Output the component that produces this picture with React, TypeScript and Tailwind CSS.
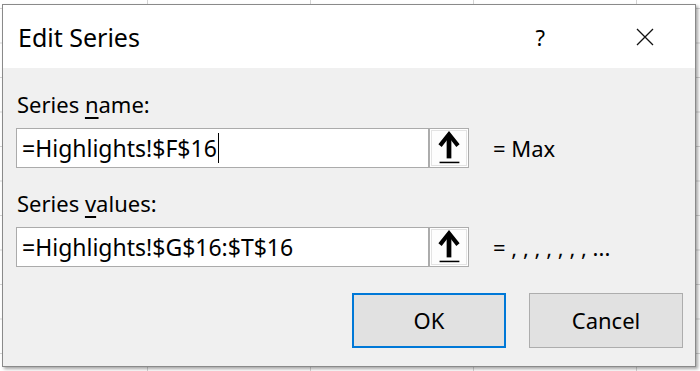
import React from 'react';

const font = "font-['Noto_Sans',sans-serif]";

// collapse/expand button beside the reference fields
const RefButton: React.FC = () => (
  <div className="w-[40px] h-[40px] border border-[#adadad] bg-white p-[1px]">
    <div className="w-full h-full border border-[#e3e3e3] bg-[#fdfdfd] flex items-center justify-center">
      <svg width="36" height="36" viewBox="0 0 36 36">
        <polyline points="8.5,15.5 18,3.5 27.5,15.5" fill="none" stroke="#000" strokeWidth="4.4" strokeLinejoin="miter" />
        <rect x="15.5" y="4" width="5" height="25" fill="#000" />
        <rect x="8" y="32.5" width="21" height="1.6" fill="#000" />
      </svg>
    </div>
  </div>
);

const RefRow: React.FC<{ value: string; result: string; caret?: boolean }> = ({ value, result, caret }) => (
  <div className="flex items-center">
    <div className="w-[413px] h-[40px] border border-[#ababab] bg-white flex items-center pl-[5px]">
      <span className="text-[23px] leading-[30px] text-black whitespace-nowrap">{value}</span>
      {caret && <span className="w-px h-[30px] bg-black ml-px" />}
    </div>
    <RefButton />
    <span className="ml-[24px] text-[22px] leading-[30px] text-black whitespace-nowrap">{result}</span>
  </div>
);

export default function App() {
  return (
    <div
      className={`w-[700px] h-[371px] overflow-hidden bg-white ${font} bg-[linear-gradient(to_right,#d4d4d4_1px,transparent_1px),linear-gradient(to_bottom,#d4d4d4_1px,transparent_1px)] bg-[size:163px_34.5px] bg-[position:147px_8px]`}
    >
      <div className="ml-[2px] mt-[4px] w-[694px] h-[363px] border border-[#8a8a8a] bg-[#f0f0f0] shadow-[2px_2px_3px_rgba(0,0,0,0.35)] flex flex-col">
        {/* Title bar */}
        <div className="h-[63px] bg-white flex items-center pl-[15px]">
          <span className="text-[25px] text-black leading-[34px] mt-[1px]">Edit Series</span>
          <span className="ml-auto text-[22px] text-black leading-[30px] mt-[1px]">?</span>
          <div className="w-[18px] h-[18px] ml-[91px] mr-[41px] mt-[1px]">
            <svg width="18" height="18" viewBox="0 0 18 18">
              <path d="M1 1 L17 17 M17 1 L1 17" stroke="#111" strokeWidth="1.3" />
            </svg>
          </div>
        </div>

        {/* Body */}
        <div className="flex-1 flex flex-col pl-[13px] pr-[12px] pt-[21px] pb-[18px]">
          <label className="text-[22px] leading-[30px] text-black pl-[1px] mb-[9px]">
            Series <span className="underline underline-offset-[4px]">n</span>ame:
          </label>
          <RefRow value="=Highlights!$F$16" result="= Max" caret />

          <label className="text-[22px] leading-[30px] text-black pl-[1px] mt-[20px] mb-[9px]">
            Series <span className="underline underline-offset-[4px]">v</span>alues:
          </label>
          <RefRow value="=Highlights!$G$16:$T$16" result="= , , , , , , , ..." />

          <div className="mt-auto flex justify-end gap-[23px]">
            <button className="w-[154px] h-[55px] bg-[#e1e1e1] border-2 border-[#0078d7] text-[22px] text-black">
              OK
            </button>
            <button className="w-[154px] h-[55px] bg-[#e1e1e1] border border-[#adadad] text-[22px] text-black">
              Cancel
            </button>
          </div>
        </div>
      </div>
    </div>
  );
}
